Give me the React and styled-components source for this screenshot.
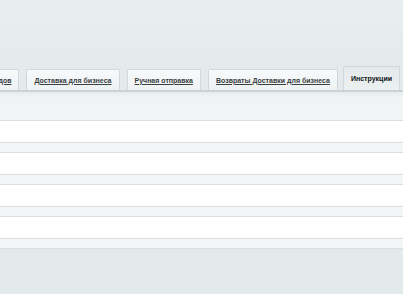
import React from "react";
import styled, { createGlobalStyle } from "styled-components";

const Global = createGlobalStyle`
  html, body {
    margin: 0;
    padding: 0;
    background: #e3eaec;
    font-family: "Liberation Sans", Arial, sans-serif;
  }
`;

const Page = styled.div`
  width: 403px;
  height: 294px;
  overflow: hidden;
  background: linear-gradient(#e9eef0, #e3eaec 90px);
  padding-top: 66px;
  box-sizing: border-box;
`;

const TabBar = styled.div`
  display: flex;
  justify-content: flex-end;
  align-items: flex-end;
  gap: 7px;
  height: 24px;
  padding-right: 3px;
  overflow: hidden;
  border-bottom: 2px solid #c9d3d6;
  white-space: nowrap;
`;

const Tab = styled.div`
  flex: none;
  height: ${({ active }) => (active ? "24px" : "21px")};
  margin-left: ${({ active }) => (active ? "-2px" : "0")};
  padding: 0 7px;
  display: flex;
  align-items: center;
  box-sizing: border-box;
  background: ${({ active }) =>
    active ? "linear-gradient(#e4eaec, #ebf0f1)" : "linear-gradient(#f8fafa, #eef2f3)"};
  border: 1px solid #d0d8db;
  border-bottom: none;
  border-radius: 2px 2px 0 0;
  font-size: 7px;
  font-weight: bold;
  color: ${({ active }) => (active ? "#111" : "#3a3f42")};
  text-decoration: ${({ active }) => (active ? "none" : "underline")};
`;

const Table = styled.div`
  display: flex;
  flex-direction: column;
`;

const Head = styled.div`
  height: 28px;
  background: linear-gradient(#e6ecee, #f0f4f5 6px);
  border-bottom: 1px solid #d9dee0;
`;

const Row = styled.div`
  height: ${({ gap }) => (gap ? "9px" : "21px")};
  background: ${({ gap }) => (gap ? "#f3f6f7" : "#ffffff")};
  border-bottom: 1px solid #d9dee0;
`;

const tabs = [
  "Список складов",
  "Доставка для бизнеса",
  "Ручная отправка",
  "Возвраты Доставки для бизнеса",
  "Инструкции",
];

export default function App() {
  const rows = [];
  for (let i = 0; i < 4; i++) {
    rows.push(<Row key={"r" + i} />);
    rows.push(<Row key={"g" + i} gap />);
  }
  return (
    <>
      <Global />
      <Page>
        <TabBar>
          {tabs.map((t, i) => (
            <Tab key={t} active={i === tabs.length - 1}>
              {t}
            </Tab>
          ))}
        </TabBar>
        <Table>
          <Head />
          {rows}
        </Table>
      </Page>
    </>
  );
}
